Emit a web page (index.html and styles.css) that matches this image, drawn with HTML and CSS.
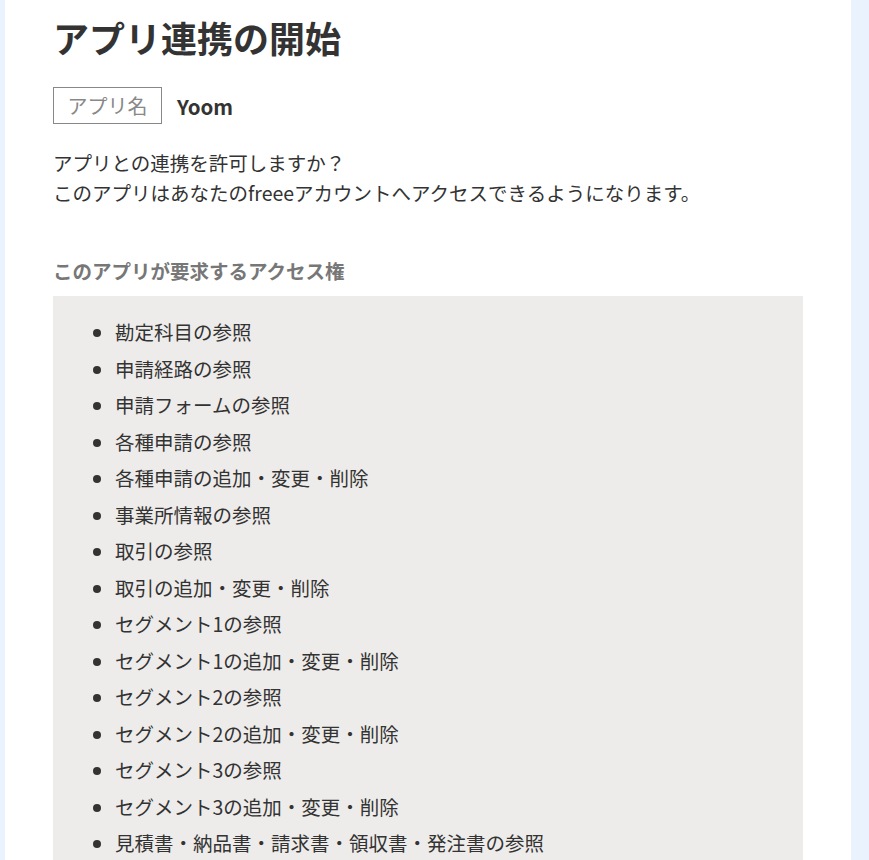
FILE: index.html
```html
<!DOCTYPE html>
<html lang="ja">
<head>
<meta charset="utf-8">
<title>アプリ連携の開始</title>
<link rel="stylesheet" href="styles.css">
</head>
<body>
<main class="page">
  <h1 class="title">アプリ連携の開始</h1>
  <div class="app-row">
    <span class="app-label">アプリ名</span>
    <span class="app-name">Yoom</span>
  </div>
  <p class="lead">アプリとの連携を許可しますか？<br>このアプリはあなたのfreeeアカウントへアクセスできるようになります。</p>
  <h2 class="perm-title">このアプリが要求するアクセス権</h2>
  <div class="perm-box">
    <ul class="perm-list">
      <li>勘定科目の参照</li>
      <li>申請経路の参照</li>
      <li>申請フォームの参照</li>
      <li>各種申請の参照</li>
      <li>各種申請の追加・変更・削除</li>
      <li>事業所情報の参照</li>
      <li>取引の参照</li>
      <li>取引の追加・変更・削除</li>
      <li>セグメント1の参照</li>
      <li>セグメント1の追加・変更・削除</li>
      <li>セグメント2の参照</li>
      <li>セグメント2の追加・変更・削除</li>
      <li>セグメント3の参照</li>
      <li>セグメント3の追加・変更・削除</li>
      <li>見積書・納品書・請求書・領収書・発注書の参照</li>
    </ul>
  </div>
</main>
</body>
</html>
```
FILE: styles.css
```css
html, body {
  margin: 0;
  padding: 0;
}
body {
  background: #eaf2fd;
  font-family: "Noto Sans CJK JP", "Noto Sans", sans-serif;
  color: #333;
}
.page {
  margin-left: 5px;
  width: 846px;
  box-sizing: border-box;
  background: #fff;
  padding: 10px 48px 40px;
  min-height: 860px;
}
.title {
  margin: 0;
  font-size: 36px;
  line-height: 54px;
  font-weight: 700;
  color: #333;
}
.app-row {
  margin-top: 23px;
  display: flex;
  align-items: center;
  gap: 15px;
}
.app-label {
  border: 1px solid #888;
  padding: 2px 13.5px;
  line-height: 31px;
  font-size: 20px;
  color: #888;
}
.app-name {
  font-size: 20.5px;
  font-weight: 700;
  color: #333;
}
.lead {
  margin: 24px 0 0;
  font-size: 19.5px;
  line-height: 30px;
  color: #333;
}
.perm-title {
  margin: 48px 0 0;
  font-size: 19.5px;
  line-height: 30px;
  font-weight: 700;
  color: #777;
}
.perm-box {
  margin-top: 10px;
  background: #eeecea;
  padding: 18px 0;
}
.perm-list {
  margin: 0;
  padding-left: 62px;
  font-size: 19.5px;
  line-height: 36.5px;
  color: #333;
}
```
